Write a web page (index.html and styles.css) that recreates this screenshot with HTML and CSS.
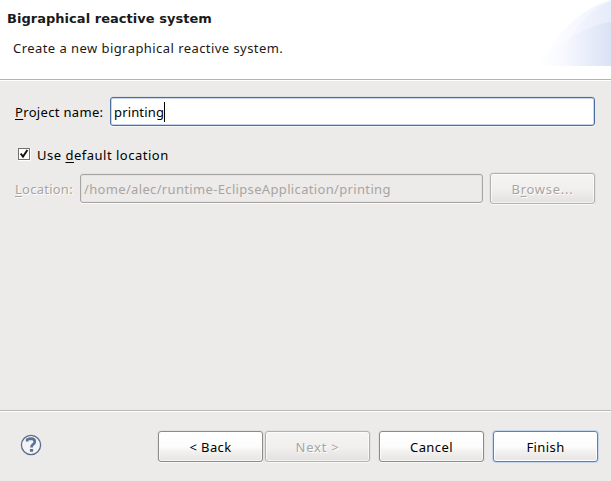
FILE: index.html
```html
<!DOCTYPE html>
<html lang="en">
<head>
<meta charset="utf-8">
<title>Bigraphical reactive system</title>
<link rel="stylesheet" href="styles.css">
</head>
<body>
<header class="banner">
  <div class="banner-text">
    <h1>Bigraphical reactive system</h1>
    <p>Create a new bigraphical reactive system.</p>
  </div>
  <svg class="banner-art" width="75" height="66" viewBox="0 0 75 66">
    <defs>
      <linearGradient id="a" x1="0" x2="1"><stop offset="0" stop-color="#fff"/><stop offset=".45" stop-color="#f8faff"/><stop offset="1" stop-color="#ecf1fb"/></linearGradient>
      <linearGradient id="b" x1="0" x2="1"><stop offset="0" stop-color="#dfe6f8" stop-opacity="0"/><stop offset="1" stop-color="#dfe6f8" stop-opacity=".5"/></linearGradient>
      <linearGradient id="c" x1="0" x2="1"><stop offset="0" stop-color="#fff"/><stop offset=".35" stop-color="#f7f9fe"/><stop offset="1" stop-color="#dae2f6"/></linearGradient>
    </defs>
    <path d="M2 66Q32 12 75 0V66Z" fill="url(#a)"/>
    <path d="M28 50Q44 14 75 1V66H28Z" fill="url(#b)"/>
    <path d="M2 66Q40 26 75 22V66Z" fill="url(#c)"/>
  </svg>
</header>
<main class="form">
  <div class="row name-row">
    <label class="name-label"><u>P</u>roject name:</label>
    <div class="field active"><span class="typed">printing</span><span class="caret"></span></div>
  </div>
  <div class="row check-row">
    <svg class="check" width="14" height="14" viewBox="0 0 14 14">
      <rect x=".5" y=".5" width="11" height="11" fill="#fff" stroke="#73716f"/>
      <path d="M.5 12.5H12.5V.5" fill="none" stroke="#fff"/>
      <path d="M2.7 5.7L5 8.6L9.4 2" fill="none" stroke="#111" stroke-width="1.9"/>
    </svg>
    <label class="check-label">Use <u>d</u>efault location</label>
  </div>
  <div class="row location-row">
    <label class="location-label dim"><u>L</u>ocation:</label>
    <div class="field disabled"><span class="path">/home/alec/runtime-EclipseApplication/printing</span></div>
    <div class="button off"><span class="browse">B<u>r</u>owse...</span></div>
  </div>
</main>
<footer class="actions">
  <svg class="help" width="22" height="22" viewBox="0 0 22 22">
    <circle cx="11" cy="11" r="9.6" fill="#f3f3f5" stroke="#566c91" stroke-width="1.3"/>
    <path d="M7.2 7.5V5.6Q9 4.7 11.2 4.7Q14.8 4.8 14.8 7.7Q14.8 9.5 12.8 10.6Q11.5 11.5 11.5 13.4" fill="none" stroke="#5b7196" stroke-width="2.7"/>
    <rect x="9.9" y="14.9" width="3.2" height="2.8" rx=".5" fill="#5b7196"/>
  </svg>
  <div class="button back"><span>&lt; Back</span></div>
  <div class="button off next"><span>Next &gt;</span></div>
  <div class="button cancel"><span>Cancel</span></div>
  <div class="button default finish"><span>Finish</span></div>
</footer>
</body>
</html>
```
FILE: styles.css
```css
* { box-sizing: border-box; }
body {
  margin: 0;
  width: 611px;
  height: 481px;
  overflow: hidden;
  display: flex;
  flex-direction: column;
  background: #edebe9;
  color: #000;
  font: 13px/20px "Noto Sans", sans-serif;
  white-space: nowrap;
}
.banner {
  height: 81px;
  display: flex;
  justify-content: space-between;
  background: #fff;
  border-bottom: 1px solid #fff;
  box-shadow: inset 0 -1px #b5b3b1;
}
.banner-text { padding: 9px 0 0 7px; color: #1a1a1a; }
h1 { margin: 0; font: bold 13px/20px "DejaVu Sans", sans-serif; letter-spacing: .03px; }
p { margin: 9px 0 0 6px; letter-spacing: .44px; }
.form { flex: 1; padding: 16px 16px 0 15px; }
.row { display: flex; align-items: center; }
u { text-decoration: underline; text-underline-offset: 2px; text-decoration-thickness: 1px; text-decoration-skip-ink: none; }
.name-row { height: 29px; }
.name-label { width: 95px; padding-top: 1px; letter-spacing: .33px; }
.field {
  display: flex;
  align-items: center;
  height: 29px;
  padding: 1px 3px 0;
  border: 1px solid;
  border-radius: 3px;
}
.active {
  flex: 1;
  background: #fff;
  border-color: #4a6f9f;
  box-shadow: inset 0 0 0 1px #c4d7ee, 0 1px #f8f8f7, 0 -1px #e3e1df;
}
.typed { letter-spacing: .15px; }
.caret { width: 1px; height: 20px; margin-top: -1px; background: #000; }
.check-row { height: 20px; margin-top: 19px; }
.check { margin: -1px 5px 0 3px; }
.check-label { letter-spacing: .5px; }
.location-row { height: 31px; margin-top: 8px; }
.location-label { width: 65px; padding-top: 1px; letter-spacing: .25px; }
.dim, .off { color: #a7a5a2; text-shadow: 1px 1px #fff; }
.disabled {
  width: 403px;
  margin-right: 7px;
  color: #a7a5a2;
  border-color: #a7a5a2;
  box-shadow: inset 0 0 0 1px #e5e3e1, 0 1px #fafafa, 0 -1px #e5e3e1;
}
.path { letter-spacing: .34px; }
.button {
  width: 105px;
  height: 31px;
  padding-top: 1px;
  display: flex;
  align-items: center;
  justify-content: center;
  border: 1px solid #8d8b88;
  border-radius: 3px;
  background: linear-gradient(#fff, #fcfcfc 50%, #f3f2f1 65%, #e7e5e3);
  box-shadow: 0 1px #f9f9f8, 0 0 0 1px #e3e1df, inset 0 0 0 1px rgba(255,255,255,.6);
  letter-spacing: .4px;
}
.off {
  border-color: #b3b1ae;
  background: linear-gradient(#f5f4f3, #f0efee 55%, #e3e1df);
  letter-spacing: .75px;
}
.dim { background: none; }
.default {
  border-color: #5e82ad;
  box-shadow: 0 0 0 1px #c5d5eb, inset 0 0 0 1px #fff;
}
.actions {
  height: 71px;
  display: flex;
  align-items: flex-start;
  padding: 20px 13px 0 20px;
  border-top: 1px solid #b9b7b4;
  box-shadow: inset 0 1px #fff;
}
.help { margin: 3px auto 0 0; }
.next { margin-left: 2px; }
.cancel, .finish { margin-left: 9px; }
```
